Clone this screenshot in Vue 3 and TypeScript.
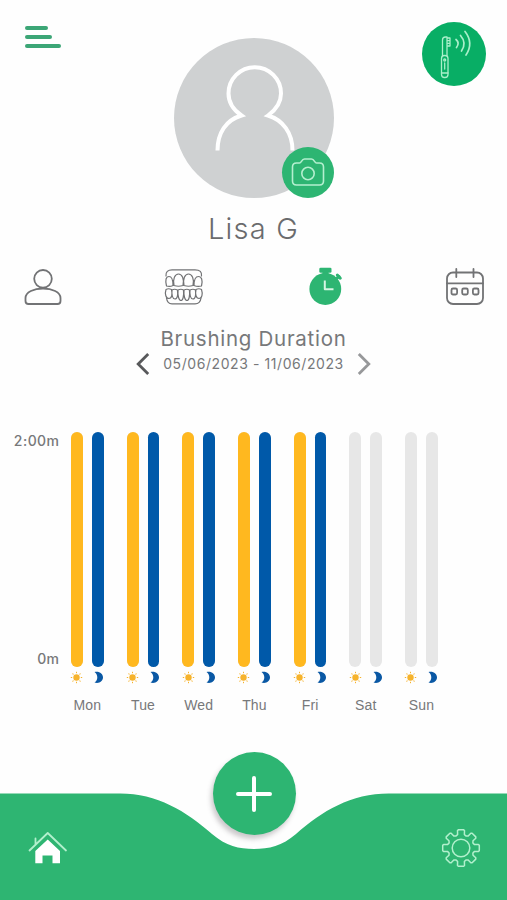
<script setup lang="ts">
interface Day {
  label: string
  morning: number | null
  evening: number | null
}

const GOAL = 120

const days: Day[] = [
  { label: 'Mon', morning: 120, evening: 120 },
  { label: 'Tue', morning: 120, evening: 120 },
  { label: 'Wed', morning: 120, evening: 120 },
  { label: 'Thu', morning: 120, evening: 120 },
  { label: 'Fri', morning: 120, evening: 120 },
  { label: 'Sat', morning: null, evening: null },
  { label: 'Sun', morning: null, evening: null },
]

const fill = (seconds: number | null): string => `${((seconds ?? 0) / GOAL) * 100}%`

const rays = [0, 45, 90, 135, 180, 225, 270, 315]

// Outline of an eight-toothed gear around the origin.
const gearPath = (() => {
  const tooth: [number, number][] = [
    [-4.6, -12.2],
    [-3.4, -13.6],
    [-3.5, -17.4],
    [-2.6, -18.3],
    [2.6, -18.3],
    [3.5, -17.4],
    [3.4, -13.6],
    [4.6, -12.2],
  ]
  const points = rays.flatMap((deg) => {
    const a = (deg * Math.PI) / 180
    return tooth.map(([x, y]) => {
      const px = x * Math.cos(a) - y * Math.sin(a)
      const py = x * Math.sin(a) + y * Math.cos(a)
      return `${px.toFixed(2)} ${py.toFixed(2)}`
    })
  })
  return `M${points.join('L')}Z`
})()
</script>

<template>
  <main class="screen">
    <header class="top">
      <button class="menu" aria-label="Menu">
        <i class="short"></i><i class="mid"></i><i class="long"></i>
      </button>
      <div class="avatar">
        <svg class="portrait" viewBox="0 0 160 160" aria-hidden="true">
          <path d="M43.500 112.500C43.500 95 52 82 67.500 77.500C58 71 54.500 64 54.500 55.500A26.200 26.200 0 0 1 107 55.500C107 64 103 71 94 77.500C109 82 118.500 95 118.500 112.500" />
        </svg>
        <button class="camera" aria-label="Change photo">
          <svg width="34" height="30" viewBox="0 0 34 30">
            <path d="M5.500 6H8.500C10.500 6 10.500 2 13.500 2H20.500C23.500 2 23.500 6 25.500 6H28.500Q32.500 6 32.500 10V24Q32.500 28 28.500 28H5.500Q1.500 28 1.500 24V10Q1.500 6 5.500 6Z" />
            <circle cx="17" cy="16.500" r="6.200" />
          </svg>
        </button>
      </div>
      <button class="device" aria-label="Toothbrush">
        <svg width="64" height="64" viewBox="0 0 64 64">
          <rect x="19.500" y="33.500" width="6.500" height="22" rx="3" />
          <path d="M20.500 34V18Q20.500 15 23.500 15H25V34M25 16H28V24H25M25 18.700H28M25 21.300H28M19.500 51H26" />
          <circle cx="22.700" cy="38" r="1" />
          <path d="M22.700 41V47" />
          <path class="wave" d="M34 17.500Q38 21 34.500 25.500M38.500 13.500Q45 21 39.500 29M43 9.500Q52 21 44 33" />
        </svg>
      </button>
    </header>

    <h1 class="name"><span>Lisa G</span></h1>

    <nav class="tabs">
      <svg width="38" height="40" viewBox="0 0 38 40">
        <circle cx="19" cy="11.800" r="8.800" />
        <path d="M4.500 37H33.500Q36.500 37 36.500 34V31C36.500 25 28 21.500 19 21.500S1.500 25 1.500 31V34Q1.500 37 4.500 37Z" />
      </svg>
      <svg class="teeth" width="40" height="40" viewBox="0 0 40 40">
        <path d="M2 9C1.500 5 4 2.800 8 2.800H31C36 2.800 38 5 37.500 9" />
        <path d="M2.500 19C1 13 2 9.500 5 9.500S9 13 9 18.500Q6 20 2.500 19ZM10 18.500C8.500 12 11 7 14.500 7S20.500 12 19 18.500Q14.500 20 10 18.500ZM20 18.500C18.500 12 21 7 24.500 7S30.500 12 29 18.500Q24.500 20 20 18.500ZM30 18.500C30 13 31.500 9.500 34.500 9.500S39 13 37.500 19Q33.500 20 30 18.500Z" />
        <path d="M2 22.500Q4.500 21 7.500 22.500C8.500 27 8 31.500 5 31.500S.500 27 2 22.500ZM8 23Q10.500 21.500 13.500 23C14 28 13.500 32 11 32S7.500 28 8 23ZM14 23Q17 21.500 19.500 23C20 29 19 33.500 17 33.500S13.500 29 14 23ZM20 23Q23 21.500 25.500 23C26 29 25 33.500 23 33.500S19.500 29 20 23ZM26 23Q29 21.500 31.500 23C32 28 31.500 32 29 32S25.500 28 26 23ZM32 22.500Q35 21 37.500 22.500C39 27 38 31.500 35 31.500S31 27 32 22.500Z" />
        <path d="M2.500 31C3 35 5 36.800 8 36.800H31C35 36.800 36.500 35 37 31" />
      </svg>
      <svg class="active" width="36" height="40" viewBox="0 0 36 40">
        <circle cx="18.300" cy="22" r="15.900" />
        <rect x="12.300" y="0.800" width="12.200" height="5" rx="1.300" />
        <path d="M15.500 4H21.500V8H15.500Z" />
        <path class="crown" d="M29 12L32 9.500" />
        <path class="nub" d="M30.300 8L33.300 11.200" />
        <path class="hand" d="M17.800 13.500V22.200H26.500" />
      </svg>
      <svg width="38" height="40" viewBox="0 0 38 40">
        <rect x="1" y="5.500" width="36" height="31.500" rx="6" />
        <path d="M1 16.300H37M10.300 2V10M27.500 2V10" />
        <rect x="5.500" y="21.500" width="5.600" height="6" rx="1.500" />
        <rect x="16.200" y="21.500" width="5.600" height="6" rx="1.500" />
        <rect x="26.900" y="21.500" width="5.600" height="6" rx="1.500" />
      </svg>
    </nav>

    <section class="period">
      <h2>Brushing Duration</h2>
      <div class="range">
        <svg width="14" height="24" viewBox="0 0 14 24"><path d="M12.200 2L2.200 12L12.200 22" /></svg>
        <span>05/06/2023 - 11/06/2023</span>
        <svg class="next" width="14" height="24" viewBox="0 0 14 24"><path d="M1.800 2L11.800 12L1.800 22" /></svg>
      </div>
    </section>

    <section class="chart">
      <div class="axis"><span>2:00m</span><span>0m</span></div>
      <div class="days">
        <div v-for="day in days" :key="day.label" class="day">
          <div class="bars">
            <div class="track"><div class="bar sun" :style="{ height: fill(day.morning) }"></div></div>
            <div class="track"><div class="bar moon" :style="{ height: fill(day.evening) }"></div></div>
          </div>
          <div class="times">
            <svg width="13" height="13" viewBox="-6.500 -6.500 13 13">
              <circle r="3.200" fill="#f6b32c" />
              <path v-for="r in rays" :key="r" class="ray" d="M0 -4.700V-5.300" :transform="`rotate(${r})`" />
            </svg>
            <svg width="13" height="13" viewBox="0 0 13 13">
              <path d="M3.500 1C8.500 0 12 2.800 12 6.500S8 13 3.500 11.500C7.500 9 7 3.500 3.500 1Z" fill="#0a58a4" />
            </svg>
          </div>
          <span class="label">{{ day.label }}</span>
        </div>
      </div>
    </section>

    <footer class="bottom">
      <svg class="wave-bg" width="507" height="107" viewBox="0 0 507 107" aria-hidden="true">
        <path d="M0 .500H120C157 .500 186 18 212 41C226 53 239 56 254 56S282 53 296 41C322 18 351 .500 389 .500H507V107H0Z" />
      </svg>
      <button class="home" aria-label="Home">
        <svg width="40" height="34" viewBox="0 0 40 34">
          <path class="roof" d="M1.500 19.500L19.700 2L38 19.500M7.500 13.500V7.500" />
          <path class="house" d="M7.300 20L19.700 8.500L32 20V32.300H24.500V24.500H14.500V32.300H7.300Z" />
        </svg>
      </button>
      <button class="add" aria-label="Add">
        <svg width="38" height="38" viewBox="0 0 38 38"><path d="M19 3V35M3 19H35" /></svg>
      </button>
      <button class="settings" aria-label="Settings">
        <svg width="40" height="40" viewBox="-20 -20 40 40">
          <path :d="gearPath" />
          <circle r="8.800" />
        </svg>
      </button>
    </footer>
  </main>
</template>

<style>
body {
  background: #fefefe;
}
</style>

<style scoped>
.screen {
  width: 507px;
  height: 900px;
  display: flex;
  flex-direction: column;
  overflow: hidden;
  background: #fefefe;
  color: #77787a;
  font-family: Inter, 'Liberation Sans', sans-serif;
}
svg {
  display: block;
  overflow: visible;
  fill: none;
  stroke-linecap: round;
  stroke-linejoin: round;
}
button {
  padding: 0;
  border: 0;
  background: none;
}
h1,
h2 {
  margin: 0;
  font-weight: 400;
}
.top {
  flex: none;
  height: 198px;
  box-sizing: border-box;
  padding: 22px 21.500px 0 25px;
  display: flex;
  justify-content: space-between;
  align-items: flex-start;
}
.menu {
  width: 64px;
  margin-top: 3.500px;
  display: flex;
  flex-direction: column;
  gap: 5.400px;
}
.menu i {
  height: 4px;
  border-radius: 2px;
  background: #3ca676;
}
.short { width: 23px; }
.mid { width: 27px; }
.long { width: 36px; }
.avatar {
  position: relative;
  width: 160px;
  height: 160px;
  margin: 16px 0 0 -3px;
  border-radius: 50%;
  background: #cfd1d2;
}
.portrait {
  stroke: #fff;
  stroke-width: 4;
  stroke-linecap: butt;
  stroke-linejoin: miter;
}
.camera {
  position: absolute;
  right: 0;
  bottom: 0.500px;
  width: 52px;
  height: 51px;
  border-radius: 50%;
  background: #2db572;
  display: grid;
  place-items: center;
}
.camera svg {
  stroke: #b4efcf;
  stroke-width: 1.600;
}
.device {
  width: 64px;
  height: 64px;
  border-radius: 50%;
  background: #08ae65;
}
.device svg {
  stroke: #a9efca;
  stroke-width: 1.300;
}
.device .wave {
  stroke-width: 1.700;
}
.name {
  flex: none;
  height: 62px;
  line-height: 62px;
  text-align: center;
  font-size: 29px;
  font-weight: 350;
  letter-spacing: 1.200px;
  color: #6a6b6d;
}
.tabs {
  flex: none;
  height: 60px;
  box-sizing: border-box;
  padding: 7px 23px 0 24px;
  display: grid;
  grid-template-columns: 140px 143px 1fr auto;
}
.tabs svg {
  stroke: #727375;
  stroke-width: 1.800;
}
.tabs .teeth {
  stroke-width: 1.200;
}
.tabs .active {
  fill: #2db572;
  stroke: none;
}
.active .hand {
  fill: none;
  stroke: #d5f5e3;
  stroke-width: 2;
  stroke-linecap: butt;
}
.active .crown,
.active .nub {
  stroke: #2db572;
  stroke-width: 3;
}
.period {
  flex: none;
  height: 112px;
  box-sizing: border-box;
  padding-top: 6px;
  display: flex;
  flex-direction: column;
  align-items: center;
}
.period h2 {
  height: 26px;
  line-height: 26px;
  font-size: 20.500px;
  letter-spacing: 0.720px;
}
.range {
  display: flex;
  align-items: center;
  gap: 13px;
  font-size: 14px;
  line-height: 24px;
  letter-spacing: 0.580px;
}
.range svg {
  stroke: #58595b;
  stroke-width: 2.800;
  stroke-linecap: butt;
  stroke-linejoin: miter;
}
.range .next {
  stroke: #97989a;
}
.chart {
  flex: none;
  height: 320px;
  display: flex;
}
.axis {
  width: 59.500px;
  height: 236px;
  display: flex;
  flex-direction: column;
  justify-content: space-between;
  text-align: right;
  font-size: 14px;
  line-height: 18px;
  font-weight: 550;
  letter-spacing: 0.450px;
}
.days {
  display: grid;
  grid-template-columns: repeat(7, 55.700px);
}
.day {
  display: flex;
  flex-direction: column;
  align-items: center;
}
.bars {
  display: flex;
  gap: 9px;
}
.track {
  display: flex;
  align-items: flex-end;
  width: 11.800px;
  height: 235px;
  border-radius: 6px;
  background: #e7e7e7;
}
.bar {
  width: 100%;
  border-radius: 6px;
}
.sun { background: #ffb81f; }
.moon { background: #0059a9; }
.times {
  margin-top: 4px;
  display: flex;
  gap: 8px;
}
.ray {
  stroke: #f6b32c;
  stroke-width: 1;
}
.label {
  margin-top: 12px;
  font: 14px/18px 'Liberation Sans', sans-serif;
  letter-spacing: 0.100px;
}
.bottom {
  flex: none;
  position: relative;
  height: 148px;
  box-sizing: border-box;
  padding: 0 26.500px 0 27.500px;
  display: flex;
  justify-content: space-between;
  align-items: flex-start;
}
.wave-bg {
  position: absolute;
  left: 0;
  bottom: 0;
  fill: #2eb572;
}
.bottom button {
  position: relative;
}
.home {
  margin-top: 79px;
}
.roof {
  stroke: #b2f0cd;
  stroke-width: 1.800;
}
.house {
  fill: #fff;
}
.add {
  width: 83px;
  height: 83px;
  border-radius: 50%;
  background: #2db572;
  box-shadow: -2px 4px 5px rgb(70 60 70 / 28%);
  display: grid;
  place-items: center;
}
.add svg {
  stroke: #fff;
  stroke-width: 4;
}
.settings {
  margin-top: 75.500px;
}
.settings svg {
  stroke: #b2f0cd;
  stroke-width: 1.500;
}
</style>
